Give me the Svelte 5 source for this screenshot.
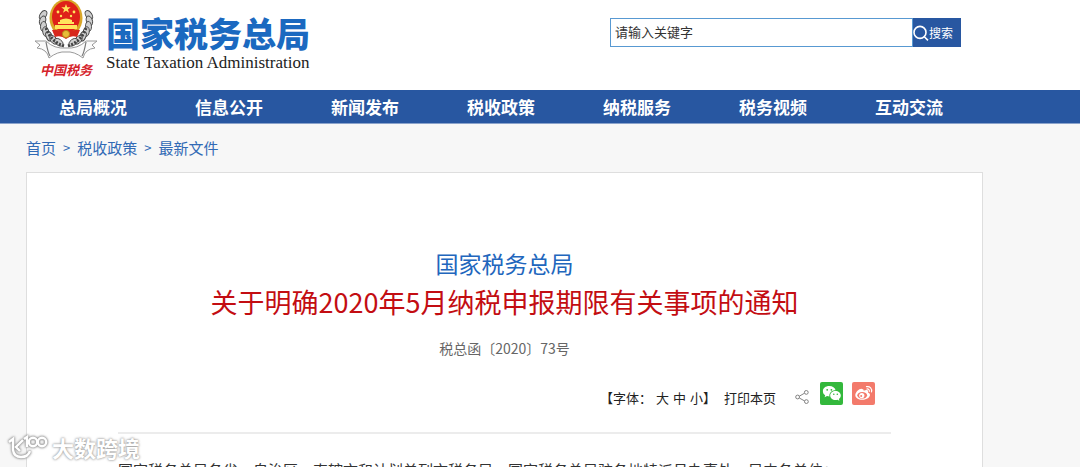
<script>
  const sections = ['总局概况', '信息公开', '新闻发布', '税收政策', '纳税服务', '税务视频', '互动交流'];
  const crumbs = ['首页', '税收政策', '最新文件'];
  const sizes = ['大', '中', '小'];
  const grains = [0, 1, 2, 3, 4, 5, 6];
</script>

<div class="page">
  <header>
    <a class="brand" href="#home">
      <span class="seal">
        <svg class="emblem" viewBox="0 0 64 60" aria-hidden="true">
          <g fill="#cfcfcf" stroke="#444" stroke-width="0.9">
            {#each grains as g}
              <ellipse cx="10" cy="28" rx="3" ry="5" transform="rotate({g * -14 + 32} 32 20)" />
              <ellipse cx="54" cy="28" rx="3" ry="5" transform="rotate({g * 14 - 32} 32 20)" />
            {/each}
          </g>
          <path d="M12 28Q17 42 30 46M52 28Q47 42 34 46" fill="none" stroke="#444" stroke-width="3" stroke-dasharray="2 1.5" />
          <path d="M1 41L12 41Q20 49 32 48Q44 49 52 41L63 41L58 45L61 48Q51 49 49 58Q40 51 32 52Q24 51 15 58Q13 49 3 48L6 45Z" fill="#fafafa" stroke="#999" stroke-width="1" />
          <path d="M12 42Q14 53 16 56M52 42Q50 53 48 56" fill="none" stroke="#777" stroke-width="1.2" />
          <ellipse cx="32" cy="18" rx="16.5" ry="19" fill="#d9a628" />
          <ellipse cx="32" cy="17" rx="14" ry="16" fill="#df2119" />
          <path d="M32 4L33.2 7.3H36.7L33.9 9.4L35 12.8L32 10.7L29 12.8L30.1 9.4L27.3 7.3H30.8Z" fill="#ffe45c" />
          <g fill="#ffe45c">
            <circle cx="24" cy="12" r="1.4" /><circle cx="40" cy="12" r="1.4" />
            <circle cx="27" cy="16" r="1.2" /><circle cx="37" cy="16" r="1.2" />
            <path d="M26 20Q32 17 38 20V22H40V24H24V22H26ZM21 25H43V29H21Z" />
          </g>
          <path d="M18 30Q25 29 32 33Q39 29 46 30L43 37Q37 35 32 39Q27 35 21 37Z" fill="#d7271c" />
          <circle cx="32" cy="34" r="3.6" fill="#e8bd38" stroke="#b7851a" />
        </svg>
        <span class="script">中国税务</span>
      </span>
      <span class="names">
        <strong>国家税务总局</strong>
        <span lang="en">State Taxation Administration</span>
      </span>
    </a>
    <form class="search" onsubmit={(e) => e.preventDefault()}>
      <input type="text" aria-label="搜索关键字" value="请输入关键字" />
      <button type="submit">
        <svg viewBox="0 0 16 16" aria-hidden="true"><circle cx="7" cy="7.4" r="6" /><path d="M11.3 11.8L15 15.4" /></svg>搜索
      </button>
    </form>
  </header>

  <nav class="menu" aria-label="栏目">
    {#each sections as s}<a href="#section">{s}</a>{/each}
  </nav>

  <main>
    <nav class="crumbs" aria-label="当前位置">
      {#each crumbs as c, i}
        {#if i}<span>&gt;</span>{/if}<a href="#crumb">{c}</a>
      {/each}
    </nav>
    <article>
      <h1><span>国家税务总局</span>关于明确2020年5月纳税申报期限有关事项的通知</h1>
      <p class="number">税总函〔2020〕73号</p>
      <div class="tools">
        <div class="sizes">
          <span>【字体：</span>
          {#each sizes as s}<button type="button">{s}</button>{/each}
        </div>
        <span>】</span>
        <button class="print" type="button">打印本页</button>
        <svg class="share" viewBox="0 0 14 14" aria-hidden="true">
          <path d="M4.3 6.2L9.5 3.2M4.3 8L9.7 11" /><circle cx="2.6" cy="7" r="1.9" /><circle cx="11.3" cy="2.4" r="1.9" /><circle cx="11.4" cy="11.6" r="1.9" />
        </svg>
        <a class="social wechat" href="#wechat" aria-label="微信">
          <svg viewBox="0 0 23 23" aria-hidden="true">
            <path d="M9.3 4C5.5 4 2.9 6.2 2.9 9.2c0 1.8.9 3.2 2.3 4.1l-.6 2 2.4-1.2c.8.2 1.5.3 2.4.3C9 11 11.7 8.3 15.6 8.3 15 5.7 12.5 4 9.3 4Z" />
            <path d="M20.8 13.6c0-2.6-2.4-4.5-5.3-4.5s-5.3 1.9-5.3 4.5 2.3 4.5 5.3 4.5c.7 0 1.3-.1 1.9-.3l2 1-.5-1.7c1.2-.9 1.9-2.1 1.9-3.5Z" />
            <g fill="#33b83c"><circle cx="7.2" cy="7.8" r=".9" /><circle cx="11.4" cy="7.8" r=".9" /><circle cx="13.8" cy="12.3" r=".8" /><circle cx="17.3" cy="12.3" r=".8" /></g>
          </svg>
        </a>
        <a class="social weibo" href="#weibo" aria-label="微博">
          <svg viewBox="0 0 23 23" aria-hidden="true">
            <path d="M9.8 6.9C7.8 6.3 3.3 10.1 3.3 13.3c0 2.7 3.1 4.5 6.9 4.5 4.7 0 7.8-2.6 7.8-5 0-1.5-1.2-2.1-2.1-2.4.5-1.3.1-2.3-1.1-2.4-.9-.1-2 .2-3.2.7 .3-1 .1-1.5-1.8-1.8Z" />
            <ellipse cx="10.2" cy="13.3" rx="4.9" ry="3.3" fill="#f37a6b" />
            <circle cx="9.8" cy="13.5" r="2.6" /><circle cx="9.2" cy="14" r="1" fill="#f37a6b" />
            <path d="M14.5 4.7c3.5-.7 5.8 2 5 5.200M14.900 7c1.700-.2 2.700.9 2.400 2.400" fill="none" stroke="#fff" stroke-width="1.2" stroke-linecap="round" />
          </svg>
        </a>
      </div>
      <p class="text">国家税务总局各省、自治区、直辖市和计划单列市税务局，国家税务总局驻各地特派员办事处，局内各单位：</p>
    </article>
  </main>

  <div class="watermark">
    <svg viewBox="0 0 40 28" aria-hidden="true">
      <path d="M1 9L5 6V17Q6 24 13 24Q20 24 22 18M15 7L8 14L12 18" /><path d="M16 6L19 4V14" /><circle cx="25" cy="9" r="4.2" /><circle cx="34" cy="9" r="4.2" />
    </svg>
    <span>大数跨境</span>
  </div>
</div>

<style>
  :global(body) { margin: 0; }
  .page {
    position: relative;
    height: 100vh;
    overflow: hidden;
    background: #f7f7f7;
    color: #333;
    font-family: "Noto Sans CJK SC", sans-serif;
    font-size: 15px;
  }
  a { color: inherit; text-decoration: none; }
  button { padding: 0; border: 0; background: none; color: inherit; font: inherit; cursor: pointer; }
  p, h1 { margin: 0; }
  header {
    display: flex;
    justify-content: space-between;
    align-items: flex-start;
    height: 90px;
    padding: 0 119px 0 34px;
    background: #fff;
  }
  .brand { display: flex; gap: 8px; }
  .seal { display: flex; flex-direction: column; align-items: center; width: 64px; }
  .emblem { width: 64px; height: 60px; }
  .script { color: #d5232b; font-size: 13px; font-style: italic; font-weight: 700; line-height: 20px; }
  .names { display: flex; flex-direction: column; padding-top: 12px; }
  .names strong { color: #1b69c0; font-size: 34px; font-weight: 900; line-height: 41px; }
  .names span { color: #222; font-family: "Liberation Serif", serif; font-size: 17px; line-height: 20px; }
  .search { display: flex; width: 351px; height: 29px; margin-top: 18px; }
  .search input {
    flex: 1;
    min-width: 0;
    box-sizing: border-box;
    padding: 0 4px 2px;
    border: 1px solid #5899d2;
    border-radius: 0;
    outline: 0;
    background: #fff;
    color: #333;
    font: 13px "Noto Sans CJK SC", sans-serif;
  }
  .search button { display: flex; align-items: center; width: 48px; background: #2857a1; color: #fff; font-size: 12px; }
  .search svg { width: 16px; height: 16px; fill: none; stroke: #fff; stroke-width: 1.6; }
  .menu {
    display: grid;
    grid-template-columns: repeat(7, 1fr);
    padding: 0 103px 0 25px;
    border-bottom: 1px solid #8ba3cb;
    background: #2857a1;
    color: #fff;
    font-size: 17px;
    font-weight: 700;
    line-height: 33px;
    text-align: center;
  }
  main { padding: 0 97px 0 26px; }
  .crumbs { display: flex; gap: 7px; padding: 12px 0; color: #316ab5; line-height: 24px; }
  .crumbs span { font-size: 13px; }
  article { padding: 71px 91px 0; border: 1px solid #dedede; background: #fff; }
  h1 { color: #c30d12; font-size: 27px; font-weight: 400; line-height: 40px; text-align: center; white-space: nowrap; }
  h1 span { display: block; color: #2166bd; font-size: 23px; line-height: 38px; }
  .number { margin-top: 14px; color: #666; font-size: 14px; line-height: 24px; text-align: center; }
  .tools {
    display: flex;
    justify-content: flex-end;
    align-items: flex-start;
    padding: 22px 16px 22px 0;
    border-bottom: 2px solid #ececec;
    color: #222;
    font-size: 13px;
    line-height: 24px;
  }
  .tools > :not(.social) { margin-top: 4px; }
  .tools > .share { width: 14px; height: 14px; margin: 8px 11px 0 19px; fill: none; stroke: #777; stroke-width: 0.9; }
  .sizes { display: flex; gap: 4px; }
  .print { margin-left: 8px; }
  .social { display: flex; width: 23px; height: 23px; border-radius: 2px; }
  .social svg { width: 23px; height: 23px; fill: #fff; }
  .wechat { background: #33b83c; }
  .weibo { margin-left: 9px; background: #f37a6b; }
  .text { padding-top: 22px; line-height: 28px; white-space: nowrap; }
  .watermark {
    position: absolute;
    bottom: 6px;
    left: 8px;
    display: flex;
    align-items: center;
    gap: 4px;
    color: #fff;
    font-size: 22px;
    font-weight: 700;
    line-height: 28px;
    text-shadow: 0 0 2px #999, 0 0 3px #aaa;
  }
  .watermark svg {
    width: 40px;
    height: 28px;
    fill: none;
    stroke: #fff;
    stroke-width: 2.4;
    filter: drop-shadow(0 0 1px #888) drop-shadow(0 0 1px #aaa);
  }
</style>
